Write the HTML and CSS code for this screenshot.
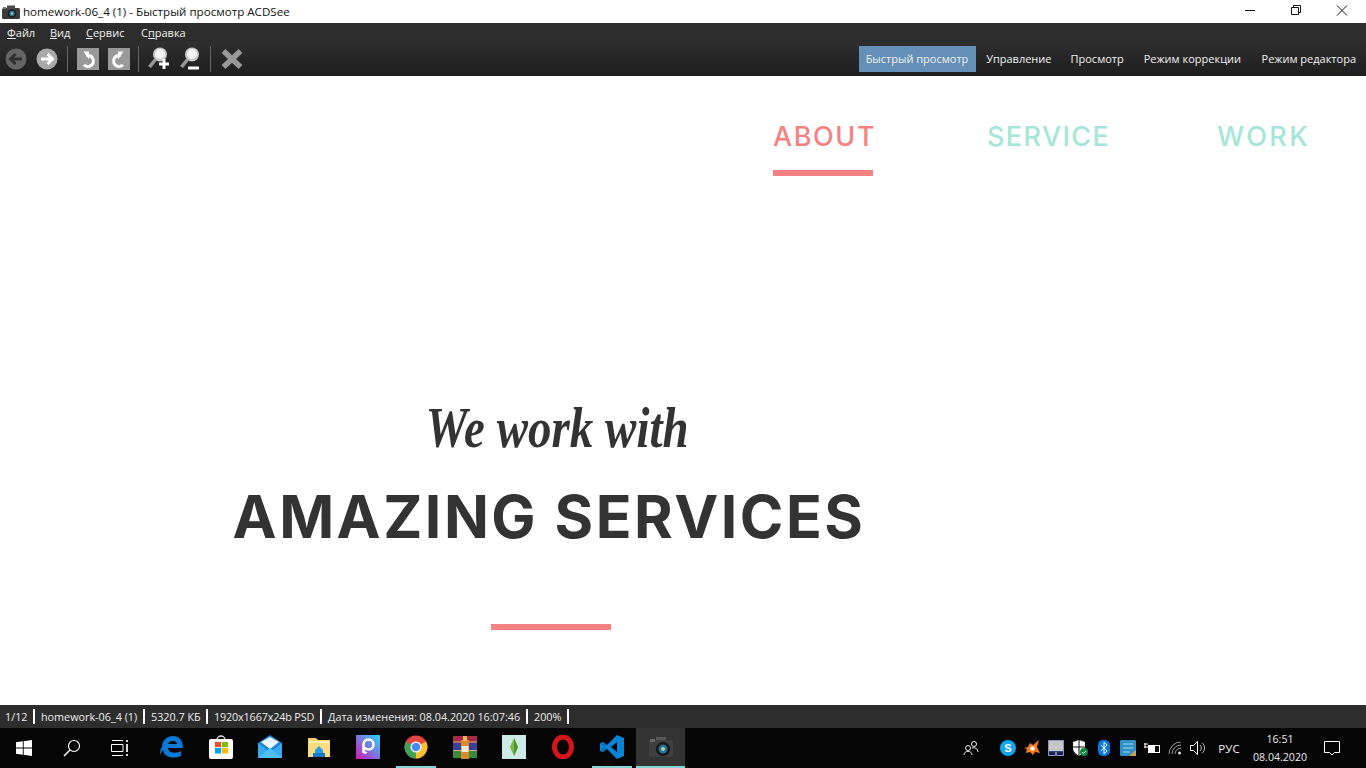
FILE: index.html
```html
<!DOCTYPE html>
<html lang="ru">
<head>
<meta charset="utf-8">
<title>homework-06_4 (1) - Быстрый просмотр ACDSee</title>
<link rel="stylesheet" href="styles.css">
</head>
<body>
<div class="window">
  <header class="titlebar">
    <svg class="app-icon" width="18" height="14" viewBox="0 0 18 14"><rect x="0" y="3" width="18" height="11" rx="1.5" fill="#3b3b3b"/><rect x="5" y="0.5" width="8" height="4" fill="#4c4c4c"/><rect x="1" y="2" width="3" height="2" fill="#777"/><circle cx="10" cy="8.5" r="4.3" fill="#1b1b1b"/><circle cx="10" cy="8.5" r="2.8" fill="#2d6d91"/><circle cx="10" cy="8.5" r="1.2" fill="#9fd0a8"/></svg>
    <span class="title">homework-06_4 (1) - Быстрый просмотр ACDSee</span>
    <div class="winctl">
      <svg width="46" height="23" viewBox="0 0 46 23"><path d="M18 10.500h10" stroke="#111" fill="none"/></svg>
      <svg width="46" height="23" viewBox="0 0 46 23"><path d="M18.500 7.500h7v7h-7zM20.500 7.500v-2h7v7h-2" stroke="#111" fill="none"/></svg>
      <svg width="46" height="23" viewBox="0 0 46 23"><path d="M18 5.500l10 10M28 5.500l-10 10" stroke="#111" fill="none"/></svg>
    </div>
  </header>

  <nav class="menubar">
    <span class="menu-item m1"><u>Ф</u>айл</span>
    <span class="menu-item m2"><u>В</u>ид</span>
    <span class="menu-item m3"><u>С</u>ервис</span>
    <span class="menu-item m4">С<u>п</u>равка</span>
  </nav>

  <div class="toolbar">
    <div class="tools">
      <svg class="tool" width="22" height="22" viewBox="0 0 22 22"><circle cx="11" cy="11" r="10.500" fill="#656565"/><path d="M17 11H6M10.500 6L5.500 11l5 5" stroke="#2f2f2f" stroke-width="3" fill="none"/></svg>
      <svg class="tool t2" width="22" height="22" viewBox="0 0 22 22"><circle cx="11" cy="11" r="10.500" fill="#a9a9a9"/><path d="M5 11h11M11.500 6l5 5-5 5" stroke="#fff" stroke-width="3" fill="none"/></svg>
      <span class="sep sep1"></span>
      <svg class="tool" width="22" height="22" viewBox="0 0 22 22"><rect width="22" height="22" fill="#999"/><path d="M9.500 7.500h1.500a5.500 5.500 0 1 1-4 9.300" stroke="#fff" stroke-width="3" fill="none"/><path d="M6.500 3.500l5.500 0v8z" fill="#fff"/></svg>
      <svg class="tool t2" width="22" height="22" viewBox="0 0 22 22"><rect width="22" height="22" fill="#999"/><path d="M12.500 7.500h-1.500a5.500 5.500 0 1 0 4 9.300" stroke="#fff" stroke-width="3" fill="none"/><path d="M15.500 3.500l-5.500 0v8z" fill="#fff"/></svg>
      <span class="sep sep2"></span>
      <svg class="tool" width="24" height="24" viewBox="0 0 24 24"><circle cx="12" cy="7.500" r="7" fill="#c9c9c9"/><circle cx="12" cy="7" r="5" fill="#f4f4f4"/><path d="M7.500 12.500L1.500 20" stroke="#9a9a9a" stroke-width="3.500"/><path d="M16 12v10M11 17h10" stroke="#fff" stroke-width="3"/></svg>
      <svg class="tool t3" width="24" height="24" viewBox="0 0 24 24"><circle cx="12" cy="7.500" r="7" fill="#c9c9c9"/><circle cx="12" cy="7" r="5" fill="#f4f4f4"/><path d="M7.500 12.500L1.500 20" stroke="#9a9a9a" stroke-width="3.500"/><path d="M8 21h11" stroke="#fff" stroke-width="3"/></svg>
      <span class="sep sep3"></span>
      <svg class="tool" width="24" height="24" viewBox="0 0 24 24"><path d="M3.500 4l17 16M20.500 4L3.500 20" stroke="#989898" stroke-width="5.500"/></svg>
    </div>
    <div class="modes">
      <span class="mode mode-active">Быстрый просмотр</span>
      <span class="mode mode-a">Управление</span>
      <span class="mode mode-b">Просмотр</span>
      <span class="mode mode-c">Режим коррекции</span>
      <span class="mode">Режим редактора</span>
    </div>
  </div>

  <main class="viewer">
    <nav class="site-nav">
      <a class="site-link site-link-active link-about">ABOUT</a>
      <a class="site-link link-service">SERVICE</a>
      <a class="site-link link-work">WORK</a>
    </nav>
    <section class="hero">
      <p class="hero-script">We work with</p>
      <h1 class="hero-title">AMAZING SERVICES</h1>
      <div class="hero-rule"></div>
    </section>
  </main>

  <footer class="statusbar">
    <span class="stat s1">1/12</span>
    <span class="stat s2">homework-06_4 (1)</span>
    <span class="stat s3">5320.7 КБ</span>
    <span class="stat s4">1920x1667x24b PSD</span>
    <span class="stat s5">Дата изменения: 08.04.2020 16:07:46</span>
    <span class="stat s6">200%</span>
  </footer>

  <div class="taskbar">
    <div class="sys">
      <span class="cell"><svg width="16" height="16" viewBox="0 0 16 16"><path d="M0 2.300l6.800-1v6.300H0zM7.700 1.200L16 0v7.600H7.700zM0 8.400h6.800v6.300l-6.800-1zM7.700 8.400H16V16l-8.300-1.200z" fill="#fff"/></svg></span>
      <span class="cell"><svg width="18" height="18" viewBox="0 0 18 18"><circle cx="11" cy="7" r="5.500" fill="none" stroke="#fff" stroke-width="1.200"/><path d="M7 11l-6 6" stroke="#fff" stroke-width="1.400"/></svg></span>
      <span class="cell"><svg width="18" height="16" viewBox="0 0 18 16"><path d="M1 .5h11M1 15.500h11M.5 4.500h11.500v7H.5z" fill="none" stroke="#fff"/><path d="M15 0h2v2h-2zM15 4h2v8h-2zM15 14h2v2h-2z" fill="#ddd"/></svg></span>
    </div>
    <div class="apps">
      <span class="app"><svg width="24" height="24" viewBox="0 0 24 24"><path d="M2 12C2 5 7 1 13 1c6 0 10 4 10 12H8c0 5 8 6 13 3v5c-7 3-17 2-18-6-2 2-2 3-3 5 0-3 0-6 2-8z" fill="#0a78d7"/><path d="M8 9h9c0-4-8-4-9 0z" fill="#050505"/></svg></span>
      <span class="app"><svg width="24" height="24" viewBox="0 0 24 24"><path d="M8 5a4 4 0 0 1 8 0" fill="none" stroke="#ddd" stroke-width="1.500"/><rect y="4" width="24" height="20" rx="2" fill="#fff"/><rect x="6" y="7" width="6" height="5" fill="#f25022"/><rect x="13" y="7" width="6" height="5" fill="#7fba00"/><rect x="6" y="13" width="6" height="5.500" fill="#00a4ef"/><rect x="13" y="13" width="6" height="5.500" fill="#ffb900"/></svg></span>
      <span class="app"><svg width="24" height="24" viewBox="0 0 24 24"><path d="M0 8L12 0l12 8v15H0z" fill="#1c86d3"/><path d="M0 8l12 9 12-9v15H0z" fill="#37a9ee"/><path d="M3 7l9-5 9 5-9 7z" fill="#eaf6fd"/><path d="M0 23l12-10 12 10z" fill="#4fc0f5"/></svg></span>
      <span class="app"><svg width="22" height="20" viewBox="0 0 22 20"><path d="M0 1h8l2 2h12v17H0z" fill="#f4d06f"/><path d="M1 4h20v13H1z" fill="#fff0b5"/><path d="M0 6h22v14H0z" fill="#fbdc81"/><path d="M7 13l4-4 4 4v3H7z" fill="#2b9be8"/><rect x="5" y="16" width="12" height="4" fill="#1778c4"/></svg></span>
      <span class="app"><svg width="24" height="24" viewBox="0 0 24 24"><defs><linearGradient id="pa" x1="0" y1="1" x2="1" y2="0"><stop offset="0" stop-color="#d417b6"/><stop offset="1" stop-color="#24d6ff"/></linearGradient></defs><rect width="24" height="24" fill="url(#pa)"/><circle cx="12.500" cy="9.500" r="5" fill="none" stroke="#fff" stroke-width="2.500"/><path d="M7.500 9.500v7.500a2 2 0 0 0 3 0" stroke="#fff" stroke-width="2.500" fill="none"/></svg></span>
      <span class="app app-open"><svg width="24" height="24" viewBox="0 0 24 24"><circle cx="12" cy="12" r="11.500" fill="#e8453c"/><path d="M12 12L22 6.500A11.500 11.500 0 0 1 12 23.500z" fill="#f9c02f"/><path d="M12 12L12 23.500A11.500 11.500 0 0 1 2 6.500z" fill="#3aa757"/><circle cx="12" cy="12" r="5.500" fill="#fff"/><circle cx="12" cy="12" r="4.300" fill="#4a8af4"/></svg></span>
      <span class="app"><svg width="24" height="24" viewBox="0 0 24 24"><rect y="1" width="24" height="7" fill="#a52b46"/><rect y="8" width="24" height="8" fill="#3a3f9a"/><rect y="16" width="24" height="7" fill="#3b8c3a"/><path d="M0 7h24M0 15.500h24" stroke="#c9b08a"/><rect x="8" y="5" width="8" height="19" fill="#d98a26"/><rect x="10" y="1" width="4" height="5" fill="#e9b65c"/><rect x="8.500" y="11" width="7" height="6" fill="#f4ead2"/></svg></span>
      <span class="app"><svg width="24" height="24" viewBox="0 0 24 24"><rect width="24" height="24" fill="#cdeae6"/><path d="M12 3l4 9-4 9-4-9z" fill="#7db84a"/><path d="M12 3v18l4-9z" fill="#4e9436"/></svg></span>
      <span class="app"><svg width="22" height="24" viewBox="0 0 22 24"><ellipse cx="11" cy="12" rx="8.500" ry="10" fill="none" stroke="#d5141c" stroke-width="5"/></svg></span>
      <span class="app app-open"><svg width="24" height="24" viewBox="0 0 24 24"><path d="M17 0l7 3v18l-7 3L7 14l-4 3-3-1.500V8.500L3 7l4 3z" fill="#0a84d6"/><path d="M17 7l-6 5 6 5z" fill="#050505"/><path d="M0 8.500L3 7l4 3-3 2zM0 15.500l3 1.500 4-3-3-2z" fill="#0a6fb8"/></svg></span>
      <span class="app app-active"><svg width="24" height="22" viewBox="0 0 24 22"><rect x="7" y="1" width="10" height="6" fill="#555"/><rect x="0" y="4" width="24" height="17" rx="2" fill="#3e3e3e"/><rect x="1" y="3" width="5" height="3" fill="#666"/><circle cx="14" cy="13" r="7" fill="#161616"/><circle cx="14" cy="13" r="4.500" fill="#2a6f96"/><circle cx="14" cy="13" r="2" fill="#a7d6a0"/></svg></span>
    </div>
    <div class="tray">
      <span class="tray-item tray-people"><svg width="16" height="16" viewBox="0 0 16 16"><circle cx="5" cy="8" r="2.500" fill="none" stroke="#eee"/><path d="M1 15c0-5 8-5 8 0" fill="none" stroke="#eee"/><circle cx="11" cy="4" r="2.500" fill="none" stroke="#eee"/><path d="M9 8c3-1 6 1 6 4" fill="none" stroke="#eee"/></svg></span>
      <span class="tray-item"><svg width="16" height="16" viewBox="0 0 16 16"><circle cx="8" cy="8" r="8" fill="#12a5ea"/><text x="8" y="12" font-size="11" font-family="Liberation Sans" font-weight="700" text-anchor="middle" fill="#fff">S</text></svg></span>
      <span class="tray-item"><svg width="16" height="16" viewBox="0 0 16 16"><path d="M0 8l4-1 2-4 3 2 6-5-2 7 3 6-5-1-2 3-3-3-4 1 1-4z" fill="#f57b1d"/><circle cx="8.500" cy="8.500" r="2.200" fill="#fff"/></svg></span>
      <span class="tray-item"><svg width="16" height="16" viewBox="0 0 16 16"><rect x=".5" y=".5" width="15" height="15" fill="#c8c8c8" stroke="#8a93b8"/><path d="M1 11.500h14M8 11.500v4" stroke="#37457a"/><path d="M1 12h6v3H1zM9 12h6v3H9z" fill="#1b2250"/></svg></span>
      <span class="tray-item"><svg width="16" height="16" viewBox="0 0 16 16"><path d="M1 2l6-2 6 2v6c0 4-3 6-6 8-3-2-6-4-6-8z" fill="#fff"/><path d="M7 0v16M1 7h12" stroke="#050505"/><circle cx="12" cy="12" r="4" fill="#10893e"/><path d="M10 12l1.500 1.500 2.500-2.500" stroke="#fff" fill="none"/></svg></span>
      <span class="tray-item"><svg width="12" height="16" viewBox="0 0 12 16"><rect width="12" height="16" rx="5" fill="#0a78e0"/><path d="M3 5l6 6-3 3V2l3 3-6 6" stroke="#fff" fill="none"/></svg></span>
      <span class="tray-item"><svg width="16" height="16" viewBox="0 0 16 16"><rect width="16" height="16" rx="1" fill="#2f8fc6"/><path d="M3 4h10M3 8h10M3 12h7" stroke="#a5d8ef"/><path d="M9 16l7-6v6z" fill="#c9a24a"/></svg></span>
      <span class="tray-item"><svg width="16" height="12" viewBox="0 0 16 12"><rect x="4.500" y="3.500" width="11" height="7" fill="none" stroke="#fff"/><rect x="5" y="4" width="6" height="6" fill="#fff"/><path d="M0 2h4M0 5h4M1 1v5" stroke="#fff"/></svg></span>
      <span class="tray-item"><svg width="16" height="14" viewBox="0 0 16 14"><path d="M1 13A12 12 0 0 1 13 1M4 13a9 9 0 0 1 9-9M7 13a6 6 0 0 1 6-6" stroke="#999" fill="none"/><circle cx="11.500" cy="12" r="1.500" fill="#ddd"/></svg></span>
      <span class="tray-item tray-vol"><svg width="16" height="14" viewBox="0 0 16 14"><path d="M.5 4.500h3l4-4v13l-4-4h-3z" fill="none" stroke="#fff"/><path d="M10 4a4 4 0 0 1 0 6M12.500 2a7 7 0 0 1 0 10" fill="none" stroke="#bbb"/></svg></span>
      <span class="lang">РУС</span>
      <span class="clock"><span>16:51</span><span>08.04.2020</span></span>
      <span class="notify"><svg width="16" height="15" viewBox="0 0 16 15"><path d="M.5.500h15v11h-5L8 14l-2.500-2.500h-5z" fill="none" stroke="#fff"/></svg></span>
    </div>
  </div>
</div>
</body>
</html>
```
FILE: styles.css
```css
* { box-sizing: border-box; }
html, body { margin: 0; padding: 0; }
body { width: 1366px; height: 768px; overflow: hidden; background: #fff; font-family: "Open Sans", "Noto Sans", sans-serif; }
.window { display: flex; flex-direction: column; width: 1366px; height: 768px; }

.titlebar { display: flex; align-items: center; height: 23px; background: #fff; color: #111; font-size: 11.6px; padding-left: 2px; }
.app-icon { margin-right: 3px; }
.title { flex: 1; }
.winctl { display: flex; width: 138px; margin-right: 1px; }

.menubar { display: flex; align-items: center; height: 21px; background: #2d2d2d; color: #f0f0f0; font-size: 11px; padding-bottom: 2px; }
.m1 { margin-left: 7px; width: 43px; }
.m2 { width: 36px; }
.m3 { width: 55px; }
.m4 { width: 50px; }

.toolbar { display: flex; align-items: center; justify-content: space-between; height: 32px; padding-bottom: 2px; background: linear-gradient(#2d2d2d, #242424 55%, #1f1f1f); }
.tools { display: flex; align-items: center; padding-left: 5px; }
.tool { display: block; flex: none; }
.t2 { margin-left: 9px; }
.t3 { margin-left: 8px; }
.sep { width: 1px; height: 26px; background: #666; margin-right: 9px; }
.sep1 { margin-left: 9px; }
.sep2 { margin-left: 8px; }
.sep3 { margin-left: 6px; }
.modes { display: flex; align-items: center; height: 26px; color: #f2f2f2; font-size: 11px; padding-right: 2px; }
.mode { display: block; flex: none; padding: 0 8px 0 11px; line-height: 26px; white-space: nowrap; }
.mode-active { background: #648fb6; padding: 0 0 0 7px; width: 117px; margin-right: -0.5px; }
.mode-b { margin-right: 1px; }
.mode-c { margin-right: 1.5px; }

.viewer { flex: 1; background: #fff; overflow: hidden; }
.site-nav { display: flex; justify-content: flex-end; padding: 41px 58px 0 0; font-family: "Inter", "Lato", sans-serif; font-weight: 500; font-size: 27px; line-height: 40px; }
.site-link { display: block; height: 59px; text-align: center; white-space: nowrap; color: #a5e6d8; }
.link-about { width: 100px; margin-right: 114px; letter-spacing: 1.6px; }
.link-service { width: 120px; margin-right: 110px; letter-spacing: 1.4px; }
.link-work { width: 91px; letter-spacing: 2.4px; }
.site-link-active { color: #f58282; border-bottom: 6px solid #f58282; }

.hero { display: flex; flex-direction: column; align-items: center; width: 1102px; padding-top: 222px; color: #333; }
.hero-script { margin: 0 0 0 12px; font-family: "Liberation Serif", serif; font-style: italic; font-weight: 700; font-size: 58px; line-height: 60px; white-space: nowrap; transform: scaleX(0.81); }
.hero-title { margin: 23px 4px 0 0; font-family: "Inter", "Lato", sans-serif; font-weight: 700; font-size: 59px; line-height: 72px; white-space: nowrap; letter-spacing: 2.5px; }
.hero-rule { width: 120px; height: 6px; margin-top: 71px; background: #f58282; }

.statusbar { display: flex; align-items: center; height: 23px; background: #2d2d2d; color: #eee; font-size: 10.8px; }
.stat { display: block; height: 15px; line-height: 15px; border-right: 2px solid #fff; white-space: nowrap; padding-left: 5px; }
.s1 { width: 35px; }
.s2 { width: 110px; padding-left: 6px; }
.s3 { width: 63px; padding-left: 6px; }
.s4 { width: 114px; padding-left: 6px; letter-spacing: -0.15px; }
.s5 { width: 206px; padding-left: 6px; }
.s6 { width: 41px; padding-left: 6px; }

.taskbar { display: flex; height: 40px; background: #050505; color: #eee; }
.sys { display: flex; flex: none; width: 147.5px; }
.cell { display: flex; align-items: center; justify-content: center; width: 48px; height: 40px; }
.apps { display: flex; }
.app { position: relative; display: flex; align-items: center; justify-content: center; width: 48.9px; height: 40px; padding-bottom: 2px; }
.app-open::after { content: ""; position: absolute; left: 4.500px; right: 4.500px; bottom: 0; height: 2px; background: #7fd4d4; }
.app-active { background: #333; }
.app-active::after { content: ""; position: absolute; left: 0; right: 0; bottom: 0; height: 2px; background: #7fd4d4; }
.tray { display: flex; align-items: center; margin-left: auto; }
.tray-item { display: flex; align-items: center; justify-content: center; width: 24px; height: 40px; }
.tray-people { margin-right: 13px; }
.tray-vol { margin-left: -2px; }
.lang { width: 34px; text-align: center; font-size: 11.5px; margin-left: 2px; }
.clock { display: flex; flex-direction: column; align-items: center; width: 68px; font-size: 10.6px; line-height: 18px; }
.notify { display: flex; align-items: center; justify-content: center; width: 36px; height: 40px; margin-right: 16px; }
```
